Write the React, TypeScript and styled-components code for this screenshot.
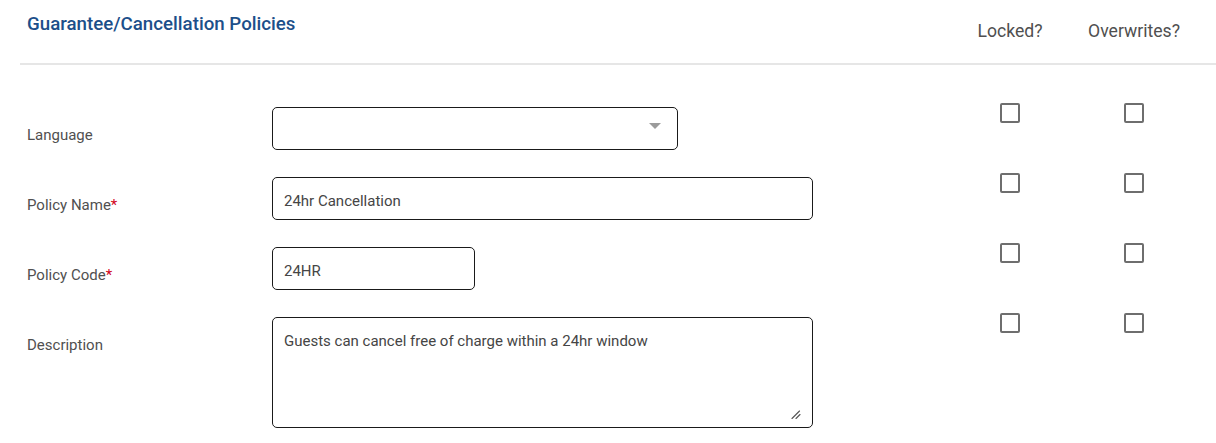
import React from "react";
import styled, { createGlobalStyle } from "styled-components";

const Global = createGlobalStyle`
  html, body { margin: 0; padding: 0; background: #fff; }
  body { font-family: Roboto, "Noto Sans", Arial, sans-serif; }
  * { box-sizing: border-box; }
`;

const Page = styled.div`
  width: 1216px;
  padding-left: 20px;
`;

const Header = styled.div`
  display: grid;
  grid-template-columns: 1fr 124px 124px;
  height: 65px;
  border-bottom: 2px solid #e6e6e6;
  padding-right: 20px;
`;

const Title = styled.h3`
  margin: 0;
  padding: 13px 0 0 7px;
  font-size: 18.72px;
  font-weight: 500;
  color: #1c4f8a;
`;

const ColHead = styled.div`
  padding-top: 21px;
  text-align: center;
  font-size: 17.6px;
  color: #4f4f4f;
`;

const Rows = styled.div`
  display: flex;
  flex-direction: column;
  padding: 38px 20px 0 7px;
`;

const Row = styled.div<{ $tall?: boolean }>`
  display: grid;
  grid-template-columns: 245px 1fr 124px 124px;
  align-items: start;
  height: ${(p) => (p.$tall ? "120px" : "70px")};
`;

const Label = styled.label`
  padding-top: 23px;
  font-size: 15px;
  color: #505050;
`;

const Req = styled.span`
  color: #d0021b;
`;

const FieldCell = styled.div`
  padding-top: 4px;
`;

const fieldBase = `
  display: block;
  border: 1px solid #1a1a1a;
  border-radius: 5px;
  font-family: Roboto, "Noto Sans", Arial, sans-serif;
  font-size: 15px;
  color: #454545;
  background: #fff;
  outline: none;
`;

const TextInput = styled.input<{ $w: number }>`
  ${fieldBase}
  width: ${(p) => p.$w}px;
  height: 43px;
  padding: 4px 11px 0;
`;

const SelectBox = styled.div<{ $w: number }>`
  ${fieldBase}
  position: relative;
  width: ${(p) => p.$w}px;
  height: 43px;
  &::after {
    content: "";
    position: absolute;
    right: 16px;
    top: 15px;
    border-left: 6px solid transparent;
    border-right: 6px solid transparent;
    border-top: 6px solid #9b9b9b;
  }
`;

const AreaWrap = styled.div<{ $w: number }>`
  position: relative;
  width: ${(p) => p.$w}px;
`;

const TextArea = styled.textarea`
  ${fieldBase}
  width: 100%;
  height: 111px;
  padding: 14px 11px;
  resize: none;
  line-height: 1.2;
`;

const Grip = styled.svg`
  position: absolute;
  right: 12px;
  bottom: 9px;
  width: 10px;
  height: 9px;
  pointer-events: none;
`;

const CheckCell = styled.div`
  display: flex;
  justify-content: center;
`;

const Check = styled.input.attrs({ type: "checkbox" })`
  appearance: none;
  margin: 0;
  width: 20px;
  height: 20px;
  border: 2px solid #6e6e6e;
  border-radius: 2px;
  background: #fff;
`;

type RowDef = {
  label: string;
  req?: boolean;
  kind: "select" | "input" | "textarea";
  width: number;
  value?: string;
};

const rows: RowDef[] = [
  { label: "Language", kind: "select", width: 406 },
  { label: "Policy Name", req: true, kind: "input", width: 541, value: "24hr Cancellation" },
  { label: "Policy Code", req: true, kind: "input", width: 203, value: "24HR" },
  {
    label: "Description",
    kind: "textarea",
    width: 541,
    value: "Guests can cancel free of charge within a 24hr window",
  },
];

export default function App() {
  return (
    <Page>
      <Global />
      <Header>
        <Title>Guarantee/Cancellation Policies</Title>
        <ColHead>Locked?</ColHead>
        <ColHead>Overwrites?</ColHead>
      </Header>
      <Rows>
        {rows.map((r) => (
          <Row key={r.label} $tall={r.kind === "textarea"}>
            <Label>
              {r.label}
              {r.req && <Req>*</Req>}
            </Label>
            <FieldCell>
              {r.kind === "select" && <SelectBox $w={r.width} />}
              {r.kind === "input" && (
                <TextInput $w={r.width} defaultValue={r.value} />
              )}
              {r.kind === "textarea" && (
                <AreaWrap $w={r.width}>
                  <TextArea defaultValue={r.value} />
                  <Grip viewBox="0 0 10 9">
                    <path
                      d="M1 8.5 L8.5 1 M5 8.5 L9 4.5"
                      stroke="#555"
                      strokeWidth="1.1"
                      strokeLinecap="round"
                      fill="none"
                    />
                  </Grip>
                </AreaWrap>
              )}
            </FieldCell>
            <CheckCell>
              <Check />
            </CheckCell>
            <CheckCell>
              <Check />
            </CheckCell>
          </Row>
        ))}
      </Rows>
    </Page>
  );
}
